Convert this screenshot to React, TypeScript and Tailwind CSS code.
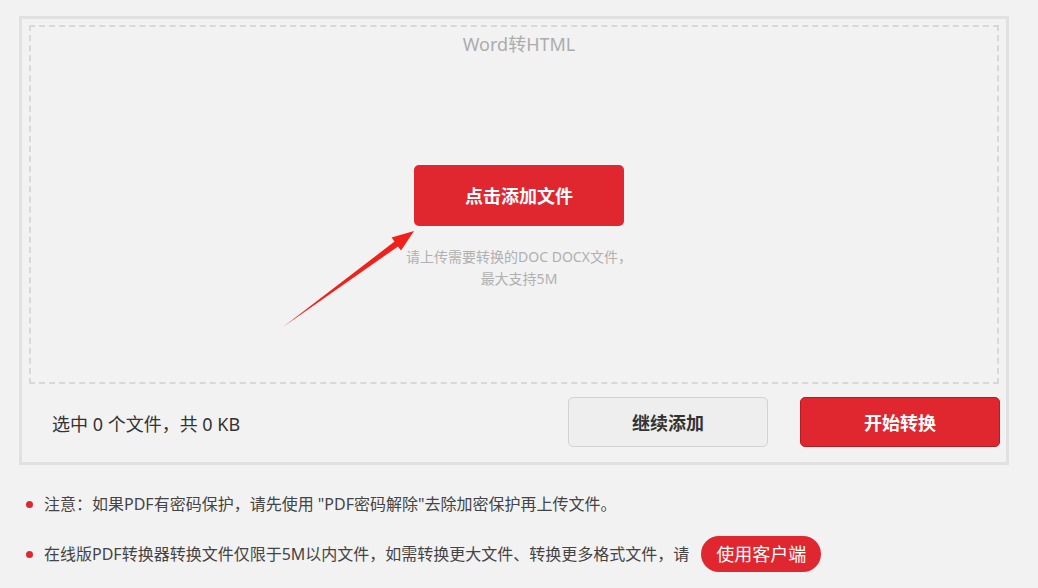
import React from "react";

const font = { fontFamily: '"Noto Sans", "Noto Sans CJK SC", sans-serif' };

function Arrow() {
  return (
    <svg
      className="absolute left-0 top-0 pointer-events-none"
      width="1038"
      height="588"
      viewBox="0 0 1038 588"
    >
      <polygon
        points="283,327 394.5,241.6 391.6,237.5 414,231 401,250.4 398,246.4"
        fill="#f0211b"
      />
    </svg>
  );
}

export default function App() {
  return (
    <div
      className="relative w-[1038px] h-[588px] bg-[#f2f2f2] overflow-hidden pt-[16px] pl-[19px]"
      style={font}
    >
      <div className="w-[990px] h-[449px] border-[3px] border-[#e1e1e1] pt-[6px] pl-[7px] pr-[6px] flex flex-col">
        <div className="w-[970px] h-[359px] border-2 border-dashed border-[#d8d8d8] pl-[10px] flex flex-col items-center">
          <div className="mt-[5px] text-[18px] leading-[24px] text-[#acacac]">Word转HTML</div>
          <button className="mt-[109px] w-[210px] h-[61px] rounded-[5px] bg-[#e0262e] text-white text-[18px] font-bold pt-[2px]">
            点击添加文件
          </button>
          <div className="mt-[20px] text-[14px] leading-[22px] text-[#b0b0b0] text-center">
            请上传需要转换的DOC DOCX文件，
            <br />
            最大支持5M
          </div>
        </div>
        <div className="mt-[13px] flex items-center h-[50px]">
          <div className="ml-[23px] mt-[4px] text-[18px] text-[#333]">选中 0 个文件，共 0 KB</div>
          <button className="ml-auto w-[200px] h-[50px] rounded-[5px] bg-[#eeeeee] border border-[#d2d2d2] text-[#333] text-[18px] font-bold pt-[2px]">
            继续添加
          </button>
          <button className="ml-[32px] w-[200px] h-[50px] rounded-[5px] bg-[#e0262e] border border-[#b81c22] text-white text-[18px] font-bold pt-[2px]">
            开始转换
          </button>
        </div>
      </div>
      <div className="mt-[26px] flex flex-col text-[16px] text-[#444]">
        <div className="flex items-center h-[26px] ml-[7px]">
          <span className="w-[7px] h-[7px] rounded-full bg-[#e0262e] mr-[11px]" />
          注意：如果PDF有密码保护，请先使用 "PDF密码解除"去除加密保护再上传文件。
        </div>
        <div className="flex items-center h-[36px] ml-[7px] mt-[19px]">
          <span className="w-[7px] h-[7px] rounded-full bg-[#e0262e] mr-[11px]" />
          在线版PDF转换器转换文件仅限于5M以内文件，如需转换更大文件、转换更多格式文件，请
          <span className="ml-[12px] w-[120px] h-[36px] rounded-full bg-[#e0262e] text-white text-[18px] flex items-center justify-center">
            使用客户端
          </span>
        </div>
      </div>
      <Arrow />
    </div>
  );
}
